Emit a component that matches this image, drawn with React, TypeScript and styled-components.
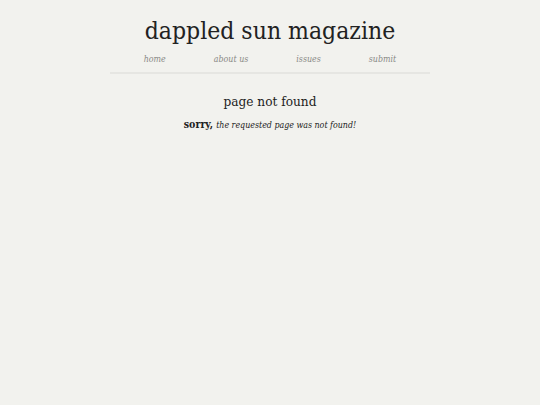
import React from 'react';
import styled, { createGlobalStyle } from 'styled-components';

const GlobalStyle = createGlobalStyle`
  html, body {
    margin: 0;
    padding: 0;
    background: #f2f2ee;
  }
  body {
    font-family: 'DejaVu Serif Condensed', 'DejaVu Serif', Georgia, serif;
    font-stretch: condensed;
    color: #222;
  }
`;

const Page = styled.div`
  width: 320px;
  margin: 0 auto;
  padding-top: 14px;
`;

const Header = styled.header`
  border-bottom: 2px solid #e6e6e2;
  padding-bottom: 6px;
`;

const Title = styled.h1`
  margin: 0;
  text-align: center;
  font-weight: normal;
  font-size: 24.5px;
  line-height: 34px;
  color: #222;
`;

const Nav = styled.nav`
  display: flex;
  justify-content: center;
  gap: 48px;
  margin-top: 4px;
`;

const NavLink = styled.a`
  font-size: 8.8px;
  font-style: italic;
  color: #8a8a86;
  text-decoration: none;
  line-height: 14px;
  cursor: pointer;
`;

const Content = styled.main`
  text-align: center;
  padding-top: 17px;
`;

const Heading = styled.h2`
  margin: 0;
  font-weight: normal;
  font-size: 13.5px;
  line-height: 20px;
  color: #222;
`;

const Message = styled.p`
  margin: 7px 0 0;
  font-size: 8.8px;
  font-style: italic;
  color: #222;
  b {
    font-style: normal;
    font-weight: bold;
    font-size: 10.5px;
    margin-right: 3px;
  }
`;

export default function App() {
  return (
    <>
      <GlobalStyle />
      <Page>
        <Header>
          <Title>dappled sun magazine</Title>
          <Nav>
            <NavLink>home</NavLink>
            <NavLink>about us</NavLink>
            <NavLink>issues</NavLink>
            <NavLink>submit</NavLink>
          </Nav>
        </Header>
        <Content>
          <Heading>page not found</Heading>
          <Message>
            <b>sorry,</b>the requested page was not found!
          </Message>
        </Content>
      </Page>
    </>
  );
}
